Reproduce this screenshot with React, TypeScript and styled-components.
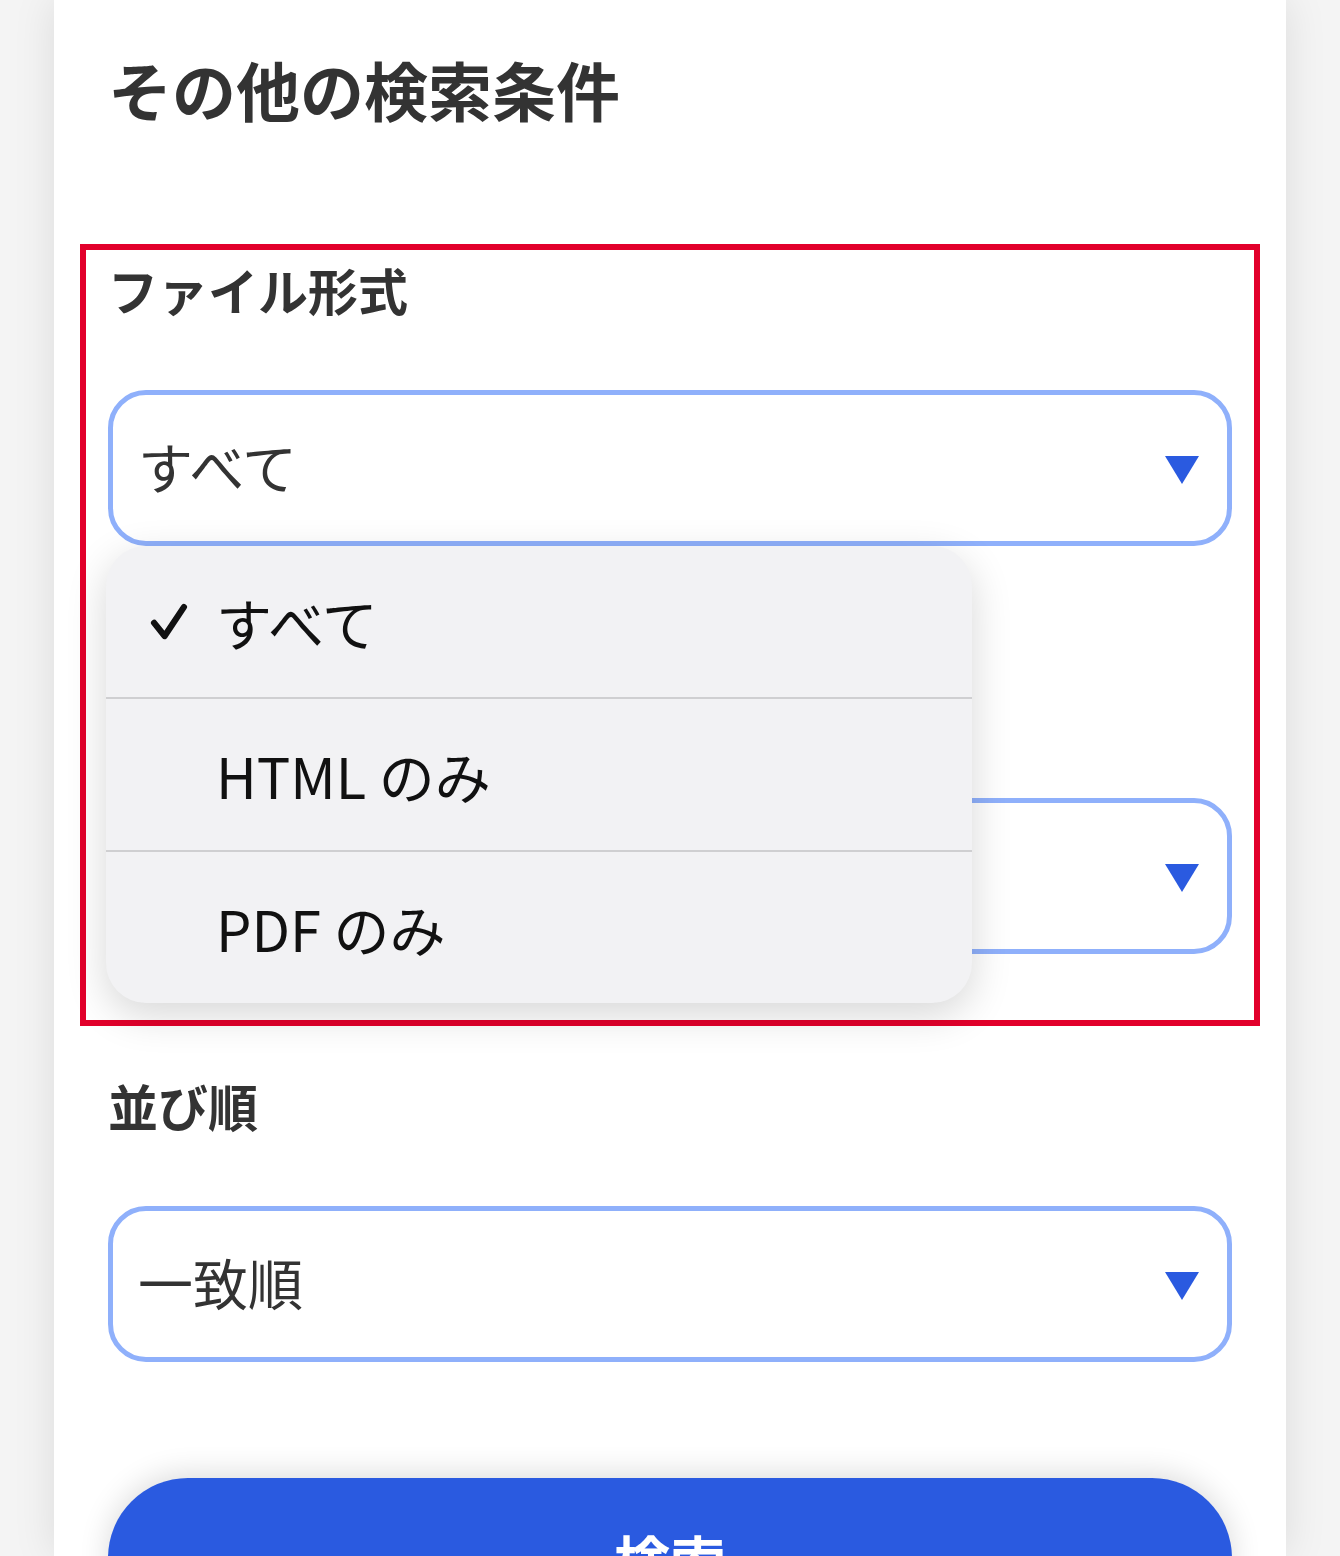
import React from "react";
import styled, { createGlobalStyle } from "styled-components";

const GlobalStyle = createGlobalStyle`
  body {
    margin: 0;
    background: #f4f4f4;
    font-family: "Noto Sans CJK JP", "Noto Sans", sans-serif;
  }
`;

interface SelectFieldProps {
  label: string;
  value: string;
  children?: React.ReactNode;
}

const SelectField = ({ label, value, children }: SelectFieldProps) => {
  return (
    <Field>
      <Label>{label}</Label>
      <SelectBox>
        <Value>{value}</Value>
        <Arrow />
        {children}
      </SelectBox>
    </Field>
  );
};

const fileTypes = ["すべて", "HTML のみ", "PDF のみ"];

const App = () => {
  return (
    <Page>
      <GlobalStyle />
      <Card>
        <Title>その他の検索条件</Title>
        <Highlight>
          <SelectField label="ファイル形式" value="すべて">
            <Menu>
              {fileTypes.map((type, i) => (
                <MenuItem key={type}>
                  <CheckSlot>
                    {i === 0 && (
                      <svg width="42" height="42" viewBox="0 0 24 24" fill="none">
                        <path d="M3.5 12.5 L9.5 20 L20.5 3.5" stroke="#111" strokeWidth="3.6" strokeLinecap="round" strokeLinejoin="round" />
                      </svg>
                    )}
                  </CheckSlot>
                  <MenuText>{type}</MenuText>
                </MenuItem>
              ))}
            </Menu>
          </SelectField>
          <SelectField label="表示件数" value="10件" />
        </Highlight>
        <SelectField label="並び順" value="一致順" />
        <SearchButton type="button">検索</SearchButton>
      </Card>
    </Page>
  );
};

export default App;

const Page = styled.div`
  display: flex;
  justify-content: center;
  height: 1556px;
  overflow: hidden;
`;

const Card = styled.div`
  width: 1232px;
  box-sizing: border-box;
  padding: 40px 54px 0 54px;

  background: #fff;
  box-shadow: 0 0 40px rgba(0, 0, 0, 0.1);
`;

const Title = styled.h2`
  margin: 0 0 108px 0;

  color: #333;
  font-size: 64px;
  font-weight: 700;
  line-height: 96px;
`;

const Highlight = styled.section`
  margin: 0 -28px 43px -28px;
  padding: 3px 22px 66px 22px;

  border: 6px solid #e2002b;
`;

const Field = styled.div`
  display: flex;
  flex-direction: column;

  & + & {
    margin-top: 115px;
  }
`;

const Label = styled.label`
  margin-bottom: 65px;

  color: #333;
  font-size: 50px;
  font-weight: 700;
  line-height: 72px;
`;

const SelectBox = styled.div`
  position: relative;
  display: flex;
  align-items: center;
  justify-content: space-between;

  height: 156px;
  box-sizing: border-box;
  padding: 0 28px 0 25px;

  border: 5px solid #8fb0fb;
  border-radius: 38px;
  background: #fff;
`;

const Value = styled.span`
  margin-top: -6px;

  color: #333;
  font-size: 55px;
  line-height: 1;
`;

const Arrow = styled.span`
  width: 0;
  height: 0;
  margin-top: 4px;

  border-left: 17px solid transparent;
  border-right: 17px solid transparent;
  border-top: 28px solid #2a5ae0;
`;

const Menu = styled.ul`
  position: absolute;
  top: 151px;
  left: -7px;
  z-index: 10;

  width: 866px;
  margin: 0;
  padding: 0;
  list-style: none;

  border-radius: 40px;
  background: #f2f2f4;
  box-shadow: 0 12px 40px rgba(0, 0, 0, 0.16);
  overflow: hidden;
`;

const MenuItem = styled.li`
  display: flex;
  align-items: center;

  height: 151px;
  padding-left: 42px;

  & + & {
    border-top: 2px solid #cfcfd1;
  }
`;

const CheckSlot = styled.span`
  display: flex;
  align-items: center;

  width: 68px;
`;

const MenuText = styled.span`
  color: #111;
  font-size: 56px;
  font-weight: 400;
`;

const SearchButton = styled.button`
  display: flex;
  align-items: center;
  justify-content: center;

  width: 100%;
  height: 160px;
  margin-top: 116px;

  border: none;
  border-radius: 80px;
  background: #2a5ae0;
  box-shadow: 0 -4px 30px rgba(0, 0, 0, 0.14);

  color: #fff;
  font-family: "Noto Sans CJK JP", sans-serif;
  font-size: 56px;
  font-weight: 700;
`;
